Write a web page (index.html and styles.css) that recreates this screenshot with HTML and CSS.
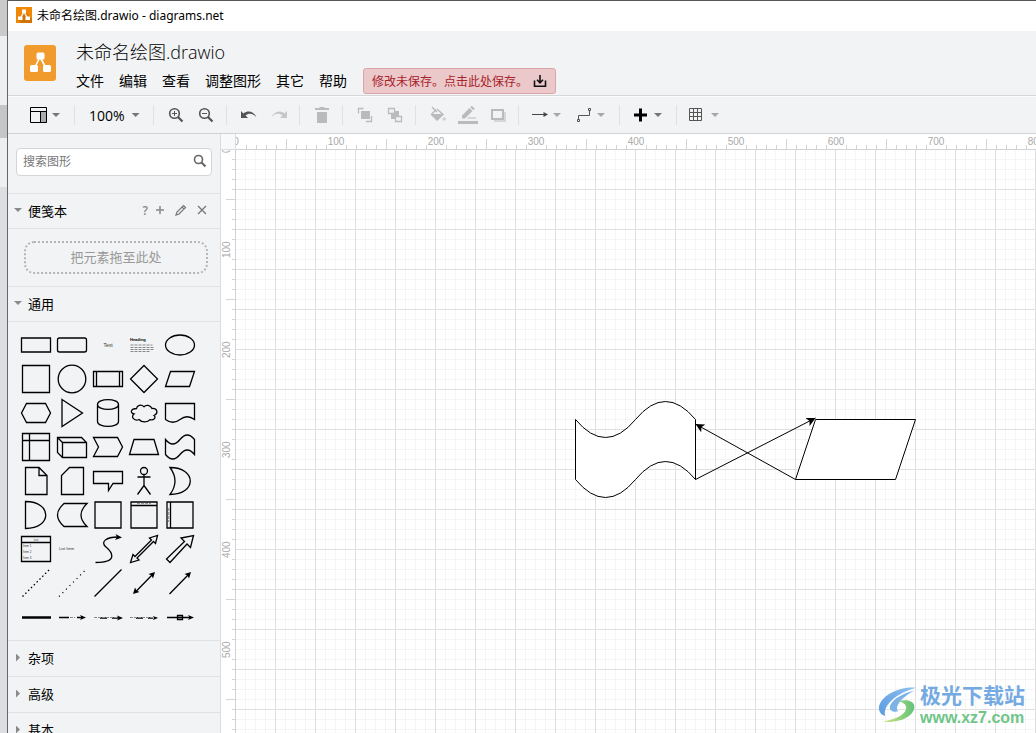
FILE: index.html
```html
<!DOCTYPE html>
<html lang="zh-CN">
<head>
<meta charset="utf-8">
<title>未命名绘图.drawio - diagrams.net</title>
<link rel="stylesheet" href="styles.css">
</head>
<body>
<div class="desktop">
  <div class="backdrop"></div>
  <div class="window">
    <div class="titlebar">
      <svg class="app-icon" width="16" height="16" viewBox="0 0 16 16"><rect width="16" height="16" fill="#f08705"/><path d="M8 4 16 12v4H5l-2-2z" fill="#cf7409"/><path d="M8 5 4.500 11M8 5l3.500 6" stroke="#fff" stroke-width="1.300"/><path d="M6 2.500h4v3.500H6zM2 9.500h4.500V13H2zM9.500 9.500H14V13H9.500z" fill="#fff"/></svg>
      <span>未命名绘图.drawio - diagrams.net</span>
    </div>

    <header class="header">
      <svg class="logo" width="32" height="36" viewBox="0 0 32 36"><rect width="32" height="36" rx="3" fill="#f19b2c"/><path d="M16 12 10.500 23M16 12l6 11" stroke="#fff" stroke-width="1.600"/><rect x="12.500" y="7.500" width="8" height="7" rx="1.500" fill="#fff"/><rect x="6" y="20" width="8" height="7" rx="1.500" fill="#fff"/><rect x="19" y="20" width="8" height="7" rx="1.500" fill="#fff"/></svg>
      <div class="header-main">
        <h1 class="filename">未命名绘图.drawio</h1>
        <nav class="menubar">
          <button>文件</button><button>编辑</button><button>查看</button><button>调整图形</button><button>其它</button><button>帮助</button>
          <button class="save-notice"><span>修改未保存。点击此处保存。</span>
            <svg width="14" height="14" viewBox="0 0 14 14" fill="none" stroke="#111" stroke-width="1.600"><path d="M1.500 6.500v5.700h11V6.500M7 1v7M4 5.800l3 3 3-3"/></svg>
          </button>
        </nav>
      </div>
    </header>

    <div class="toolbar">
      <button class="tool drop" aria-label="视图"><svg width="16" height="18" viewBox="0 0 16 18"><path d="M10 6h6v11h-6z" fill="#aaa"/><path d="M-.5 1.500h16v15h-16zM-.5 5.500h16M9.500 5.500v11" fill="none" stroke="#000"/></svg><i class="caret"></i></button>
      <i class="sep"></i>
      <button class="tool zoom">100%<i class="caret"></i></button>
      <i class="sep"></i>
      <button class="tool" aria-label="放大"><svg width="16" height="16" viewBox="0 0 16 16" fill="none" stroke="#555"><circle cx="6.500" cy="6.500" r="4.800" stroke-width="1.600"/><path d="M10 10l4.500 4.500" stroke-width="2.200"/><path d="M4 6.500h5M6.500 4v5"/></svg></button>
      <button class="tool" aria-label="缩小"><svg width="16" height="16" viewBox="0 0 16 16" fill="none" stroke="#555"><circle cx="6.500" cy="6.500" r="4.800" stroke-width="1.600"/><path d="M10 10l4.500 4.500" stroke-width="2.200"/><path d="M4 6.500h5"/></svg></button>
      <i class="sep"></i>
      <button class="tool" aria-label="撤销"><svg width="16" height="16" viewBox="0 0 16 16"><path d="M0 4v7h7L4.600 8.600C7.500 5.800 12 6 15.500 10.300 13 4.500 7 2.800 2.500 6.500z" fill="#555"/></svg></button>
      <button class="tool" aria-label="重做"><svg width="16" height="16" viewBox="0 0 16 16"><path d="M16 4v7H9l2.400-2.400C8.500 5.800 4 6 .5 10.300 3 4.500 9 2.800 13.500 6.500z" fill="#c4c6c8"/></svg></button>
      <i class="sep"></i>
      <button class="tool" aria-label="删除"><svg width="16" height="16" viewBox="0 0 16 16" fill="#b9bbbd"><path d="M1 1h4l1-1h4l1 1h4v2H1zM3 5h10v11H3z"/></svg></button>
      <i class="sep"></i>
      <button class="tool" aria-label="置前"><svg width="16" height="16" viewBox="0 0 16 16"><path d="M1.500 6.500v-5h5M14.500 9v5.500H9" fill="none" stroke="#b9bbbd" stroke-width="1.300"/><path d="M4 4h9v8H4z" fill="#b9bbbd"/></svg></button>
      <button class="tool" aria-label="置后"><svg width="16" height="16" viewBox="0 0 16 16"><path d="M4 4h8v8H4z" fill="#b9bbbd"/><path d="M1.500 1.500h6v5h-6zM8.500 9.500h6v5h-6z" fill="#f1f3f4" stroke="#b9bbbd" stroke-width="1.300"/></svg></button>
      <i class="sep"></i>
      <button class="tool" aria-label="填充颜色"><svg width="16" height="16" viewBox="0 0 16 16"><path d="M2 0l5 5M6 2.500 1.500 7.500 7 13l6-5.500L7 2" fill="none" stroke="#b9bbbd" stroke-width="1.400"/><path d="M1.500 7h11.500L7 13.500z" fill="#b9bbbd"/><circle cx="14.300" cy="12" r="1.800" fill="#d0d2d4"/></svg></button>
      <button class="tool" aria-label="线条颜色"><svg width="20" height="20" viewBox="0 0 20 20" fill="#b9bbbd"><path d="M4 10.500 11.500 3l3 3L7 13.500H4zM12.300 2.200l1.500-1.500 3 3-1.500 1.500zM10 12.500h8v1h-9zM0 16h20v3H0z"/></svg></button>
      <button class="tool" aria-label="阴影"><svg width="16" height="16" viewBox="0 0 16 16"><path d="M4 5h12v10H4z" fill="#d5d7d9"/><path d="M2 3h11v9H2z" fill="#f1f3f4" stroke="#b9bbbd" stroke-width="2"/></svg></button>
      <i class="sep"></i>
      <button class="tool drop" aria-label="连接"><svg width="16" height="16" viewBox="0 0 16 16"><path d="M0 7.500h13" stroke="#444"/><path d="M11.500 5 16 7.500 11.500 10z" fill="#444"/></svg><i class="caret pale"></i></button>
      <button class="tool drop" aria-label="航点"><svg width="16" height="16" viewBox="0 0 16 16" fill="none" stroke="#555"><path d="M2.500 12V8.500h11V4M1.500 12.500h2v2h-2zM12.500 1.500h2v2h-2z"/></svg><i class="caret pale"></i></button>
      <i class="sep"></i>
      <button class="tool drop" aria-label="插入"><svg width="16" height="16" viewBox="0 0 16 16"><path d="M1 8h13M7.500 1.500v13" stroke="#000" stroke-width="3"/></svg><i class="caret"></i></button>
      <i class="sep"></i>
      <button class="tool drop" aria-label="表格"><svg width="16" height="16" viewBox="0 0 16 16" fill="none" stroke="#555"><path d="M-.5 1.500h12v12h-12zM3.500 1.500v12M7.500 1.500v12M-.5 5.500h12M-.5 9.500h12"/></svg><i class="caret pale"></i></button>
    </div>

    <div class="workspace">
      <aside class="sidebar">
        <div class="search-area">
          <div class="search">
            <input type="text" aria-label="搜索图形" placeholder="搜索图形">
            <svg width="14" height="14" viewBox="0 0 14 14" fill="none" stroke="#666"><circle cx="5.500" cy="5.500" r="4" stroke-width="1.600"/><path d="M8.500 8.500 12.500 12.500" stroke-width="2.200"/></svg>
          </div>
        </div>
        <div class="section open"><button class="section-name"><i class="caret"></i>便笺本</button>
          <div class="section-tools">
            <button aria-label="帮助">?</button>
            <button aria-label="添加"><svg width="10" height="10" viewBox="0 0 10 10"><path d="M1 5h8M5 1v8" stroke="#888" stroke-width="1.500"/></svg></button>
            <button aria-label="编辑"><svg width="12" height="12" viewBox="0 0 12 12" fill="none" stroke="#777" stroke-width="1.200"><path d="M1 11l1-3L8.500 1.500l2 2L4 10zM7 3l2 2"/></svg></button>
            <button aria-label="关闭"><svg width="10" height="10" viewBox="0 0 10 10"><path d="M1 1l8 8M9 1 1 9" stroke="#777" stroke-width="1.300"/></svg></button>
          </div>
        </div>
        <div class="scratch"><div class="dropzone">把元素拖至此处</div></div>
        <div class="section open"><button class="section-name"><i class="caret"></i>通用</button></div>
        <div class="palette">
          <svg viewBox="0 0 36 34"><path d="M3.500 10h29v14h-29z"/></svg>
          <svg viewBox="0 0 36 34"><rect x="3.500" y="10" width="29" height="14" rx="2"/></svg>
          <svg viewBox="0 0 36 34"><text x="18" y="19" class="tiny mid">Text</text></svg>
          <svg viewBox="0 0 36 34"><text x="4" y="13" class="tiny strong">Heading</text><path class="faint" d="M4.500 17h22M4.500 19.500h24M4.500 21.500h24M4.500 23.500h20"/></svg>
          <svg viewBox="0 0 36 34"><ellipse cx="18" cy="17" rx="14.500" ry="10"/></svg>

          <svg viewBox="0 0 36 34"><path d="M4.500 3.500h27v27h-27z"/></svg>
          <svg viewBox="0 0 36 34"><circle cx="18" cy="17" r="13.800"/></svg>
          <svg viewBox="0 0 36 34"><path d="M3.500 9.500h29v15h-29zM6.500 9.500v15M29.500 9.500v15"/></svg>
          <svg viewBox="0 0 36 34"><path d="M18 3.500 31.500 17 18 30.500 4.500 17z"/></svg>
          <svg viewBox="0 0 36 34"><path d="M8.500 9.500h24l-5 15h-24z"/></svg>

          <svg viewBox="0 0 36 34"><path d="M8.500 7.500h19L32.500 17l-5 9.500h-19L3.500 17z"/></svg>
          <svg viewBox="0 0 36 34"><path d="M8 3.500 28.500 17 8 30.500z"/></svg>
          <svg viewBox="0 0 36 34"><path d="M7.500 8.500v17c0 6.500 21 6.500 21 0v-17c0-6.500-21-6.500-21 0c0 6.500 21 6.500 21 0"/></svg>
          <svg viewBox="0 0 36 34"><path d="M10.500 12.500C5 12.500 3.500 17 8 18c-4 3 1 7.500 5 5.500 3 3.500 9 3 11 .2 4 1 6.500-2.500 4-4.200 5-2.500 3-7.500-2-7-1.500-3.500-6-4-8-1.800-3-2.700-7-1.700-7.500 1.800z"/></svg>
          <svg viewBox="0 0 36 34"><path d="M3.500 7.500h29v16q-7.500-5.500-14.500 0t-14.500 0z"/></svg>

          <svg viewBox="0 0 36 34"><path d="M4.500 3.500h27v27h-27zM4.500 10.500h27M11.500 3.500v27"/></svg>
          <svg viewBox="0 0 36 34"><path d="M3.500 7.500h24l5 5v15h-24l-5-5zM3.500 7.500l5 5h24M8.500 12.500v15"/></svg>
          <svg viewBox="0 0 36 34"><path d="M3.500 7.500h24L32.500 17l-5 9.500h-24L8.500 17z"/></svg>
          <svg viewBox="0 0 36 34"><path d="M8 9.500h20l4.500 15h-29z"/></svg>
          <svg viewBox="0 0 36 34"><path d="M3.500 9.500q7.200 9 14.500 0t14.500 0v15q-7.200-9-14.500 0t-14.500 0z"/></svg>

          <svg viewBox="0 0 36 34"><path d="M7.500 3.500H21l8 8v19H7.500zM21 3.500v8h8"/></svg>
          <svg viewBox="0 0 36 34"><path d="M15.500 3.500h14v27h-22v-19z"/></svg>
          <svg viewBox="0 0 36 34"><path d="M3.500 7.500h29v12H23L18.500 26.500v-7h-15z"/></svg>
          <svg viewBox="0 0 36 34"><circle cx="18" cy="7" r="3.500"/><path d="M18 10.500v11M11.500 13h13M18 21.500l-6.500 9M18 21.500l6.500 9"/></svg>
          <svg viewBox="0 0 36 34"><path d="M8 3.500c27 0 27 27 0 27q10-13.500 0-27z"/></svg>

          <svg viewBox="0 0 36 34"><path d="M7.500 3.500c27 0 27 27 0 27z"/></svg>
          <svg viewBox="0 0 36 34"><path d="M10 5.500h23q-12 11.500 0 23H10q-13-11.500 0-23z"/></svg>
          <svg viewBox="0 0 36 34"><path d="M5 4h26v26H5z"/></svg>
          <svg viewBox="0 0 36 34"><path d="M5 4h26v26H5zM5 7.500h26"/><path class="faint" d="M11 5.700h14"/></svg>
          <svg viewBox="0 0 36 34"><path d="M5 4h26v26H5zM8.500 4v26"/><path class="faint" d="M6.700 10v14"/></svg>

          <svg viewBox="0 0 36 34"><path d="M3.500 4.500h29v25h-29zM3.500 10.500h29"/><text x="18" y="8.500" class="micro mid">List</text><text x="5" y="15" class="micro">Item 1</text><text x="5" y="21" class="micro">Item 2</text><text x="5" y="27" class="micro">Item 3</text></svg>
          <svg viewBox="0 0 36 34"><text x="5" y="18" class="micro item">List Item</text></svg>
          <svg viewBox="0 0 36 34"><path d="M5.500 30.500C29 30.500 22 20 16 15s0-10 12-10"/><path class="solid" d="M32 5.500 25 8l2-3-1.500-3z"/></svg>
          <svg viewBox="0 0 36 34"><path d="M31.500 3.500 29.500 11.500 27.500 9.500 11 26l2 2-8.500 2.500L7 22.500l2 2L25.500 8l-2-2z"/></svg>
          <svg viewBox="0 0 36 34"><path d="M31.500 3.500 28.500 15.500 25 12 8 30.500 4.500 27 22.500 9.500 19 6z"/></svg>

          <svg viewBox="0 0 36 34"><path d="M4.500 30.500l27-27" stroke-dasharray="1.500 2.500"/></svg>
          <svg viewBox="0 0 36 34"><path d="M5 30.500l26-26" stroke-dasharray="1 4"/></svg>
          <svg viewBox="0 0 36 34"><path d="M4.500 30.500l27-27"/></svg>
          <svg viewBox="0 0 36 34"><path d="M9 26.500 27 8"/><path class="solid" d="M29 6 27 12.500l-1.500-3-3-1.500zM7 28l2-6.500 1.500 3 3 1.500z"/></svg>
          <svg viewBox="0 0 36 34"><path d="M7.500 28 27 8"/><path class="solid" d="M29 6 27 12.500l-1.500-3-3-1.500z"/></svg>

          <svg viewBox="0 0 36 34"><path class="thick" d="M4 17.500h29"/></svg>
          <svg viewBox="0 0 36 34"><path d="M5 17.500h10M23 17.500h6"/><path class="faint" d="M16 17.500h5"/><path class="solid" d="M32 17.500l-6 2.500 1.500-2.500L26 15z"/></svg>
          <svg viewBox="0 0 36 34"><path d="M10 18h7M22 18h8"/><path class="faint" d="M4 17.500h28"/><path class="solid" d="M33 18l-6 2.500 1.500-2.500-1.500-2.500z"/></svg>
          <svg viewBox="0 0 36 34"><path d="M10 18h7M22 18h5"/><path class="faint" d="M4 17.500h28"/><path class="solid" d="M32 18l-5 2 1-2-1-2z"/></svg>
          <svg viewBox="0 0 36 34"><path d="M5 17.500h24M15.500 15.500h5v4h-5z"/><path class="solid" d="M32 17.500l-6 2.500 1.500-2.500L26 15z"/></svg>
        </div>
        <div class="section"><button class="section-name"><i class="caret side"></i>杂项</button></div>
        <div class="section"><button class="section-name"><i class="caret side"></i>高级</button></div>
        <div class="section"><button class="section-name"><i class="caret side"></i>基本</button></div>
      </aside>

      <main class="editor">
        <div class="corner"></div>
        <div class="ruler across"><div class="labels"><span>0</span><span>100</span><span>200</span><span>300</span><span>400</span><span>500</span><span>600</span><span>700</span><span>800</span></div></div>
        <div class="ruler down"><div class="labels"><span>0</span><span>100</span><span>200</span><span>300</span><span>400</span><span>500</span></div></div>
        <div class="canvas">
          <svg class="diagram" width="100%" height="100%">
            <defs><marker id="arrow" markerWidth="10" markerHeight="10" refX="9" refY="5" orient="auto" markerUnits="userSpaceOnUse"><path d="M9 5 0 .5l2.300 4.500L0 9.500z" fill="#000"/></marker></defs>
            <g fill="#fff" stroke="#000">
              <path d="M339.500 269.500q30 36 60 0t60 0v60q-30-36-60 0t-60 0z"/>
              <path d="M579.500 269.500h100l-20 60h-100z"/>
              <path d="M459.500 329.500 579.500 268" fill="none" marker-end="url(#arrow)"/>
              <path d="M559.500 329.500 459.500 274" fill="none" marker-end="url(#arrow)"/>
            </g>
          </svg>
          <div class="watermark">
            <svg width="40" height="42" viewBox="0 0 44 42">
              <defs><linearGradient id="sky" x1="0" y1="1" x2="1" y2="0"><stop offset="0" stop-color="#5b9be0"/><stop offset="1" stop-color="#8cc0ee"/></linearGradient><linearGradient id="leaf"><stop offset="0" stop-color="#d3e478"/><stop offset="1" stop-color="#62c27c"/></linearGradient></defs>
              <path d="M42 2C22 0 2 12 1 24c0 5 3 8 7 9-3-9 8-24 34-31z" fill="url(#sky)"/>
              <path d="M40 5C24 9 13 17 13 24c0 4 5 5 9 4-4-5 3-15 18-23z" fill="#7db4e8"/>
              <path d="M22 17c9-3 18-1 18 6 0 10-16 19-36 16 15-1 27-8 27-15 0-4-4-6-9-7z" fill="url(#leaf)"/>
            </svg>
            <div class="watermark-text"><strong>极光下载站</strong><span>www.xz7.com</span></div>
          </div>
        </div>
      </main>
    </div>
  </div>
</div>
</body>
</html>
```

FILE: styles.css
```css
* { box-sizing: border-box; }
body {
  margin: 0;
  font-family: "Open Sans", "Noto Sans CJK SC", sans-serif;
  font-size: 13px;
  color: #000;
}
button {
  display: flex;
  align-items: center;
  padding: 0;
  border: 0;
  background: none;
  font: inherit;
  color: inherit;
  white-space: nowrap;
}
svg { display: block; flex: none; overflow: visible; }

.desktop { display: flex; height: 100vh; overflow: hidden; }
.backdrop {
  flex: 0 0 7px;
  background: linear-gradient(#cacaca 36px, #efefef 36px 105px, #c6c6c6 105px 138px, #efefef 138px 187px, #dcdee1 187px);
}
.window {
  flex: 1;
  min-width: 0;
  display: flex;
  flex-direction: column;
  border-left: 1px solid #666;
  border-top: 1px solid #555;
  background: #f1f3f4;
}
.titlebar {
  flex: none;
  display: flex;
  align-items: center;
  gap: 5px;
  height: 30px;
  padding: 0 8px 2px;
  background: #fff;
  font-family: "Noto Sans", "Noto Sans CJK SC", sans-serif;
  font-size: 12px;
}

.header {
  flex: none;
  display: flex;
  gap: 20px;
  padding: 9px 16px 1px;
  border-bottom: 1px solid #d5d7d9;
}
.logo { margin-top: 5px; }
.header-main { display: flex; flex-direction: column; gap: 4px; }
.filename { margin: 0; font-size: 18px; font-weight: 300; line-height: 24px; }
.menubar { display: flex; gap: 15px; height: 26px; font-size: 14px; }
.menubar button { padding-bottom: 2px; }
.menubar .save-notice {
  gap: 5px;
  margin-left: 1px;
  padding: 0 8px;
  border: 1px solid #dba5a8;
  border-radius: 3px;
  background: #ebc8ca;
  color: #a8232b;
  font-size: 12px;
}

.toolbar {
  flex: none;
  display: flex;
  align-items: center;
  height: 38px;
  padding-left: 16px;
  border-top: 1px solid #fbfbfb;
  border-bottom: 1px solid #d0d2d4;
}
.tool { flex: none; width: 30px; height: 30px; padding-left: 2px; justify-content: center; }
.tool.drop { width: 44px; gap: 5px; padding-left: 7px; justify-content: flex-start; }
.tool.zoom { width: 66px; gap: 7px; padding-left: 8px; justify-content: flex-start; font-size: 14px; }
.sep { flex: none; width: 1px; height: 20px; margin: 0 6px; background: #dfe1e3; }
.caret {
  flex: none;
  width: 8px;
  height: 4px;
  background: #777;
  clip-path: polygon(0 0, 100% 0, 50% 100%);
}
.caret.pale { background: #a5a7a9; }
.caret.side { width: 4px; height: 8px; margin: 0 2px; clip-path: polygon(0 0, 100% 50%, 0 100%); }

.workspace { flex: 1; min-height: 0; display: flex; }
.sidebar { flex: 0 0 213px; overflow: hidden; border-right: 1px solid #dadce0; }
.search-area { padding: 14px 8px 17px; }
.search {
  display: flex;
  align-items: center;
  height: 28px;
  padding: 0 4px 2px 6px;
  border: 1px solid #d5d5d5;
  border-radius: 4px;
  background: #fff;
}
.search input {
  flex: 1;
  min-width: 0;
  padding: 0;
  border: 0;
  outline: 0;
  background: none;
  font: inherit;
  font-size: 12px;
}
.search input::placeholder { color: #777; }
.section {
  display: flex;
  align-items: center;
  justify-content: space-between;
  height: 36px;
  padding: 0 13px 2px 6px;
  border-top: 1px solid #dee0e2;
}
.section.open { border-bottom: 1px solid #dee0e2; }
.section-name { gap: 6px; }
.section-name .caret { background: #8a8a8a; }
.section-tools { display: flex; align-items: center; gap: 10px; color: #888; font-size: 12px; font-weight: 600; }
.section-tools button:first-child { margin-right: -3px; }
.scratch { padding: 12px 12px 12px 16px; }
.dropzone {
  height: 33px;
  line-height: 29px;
  border: 2px dotted #b4b5b6;
  border-radius: 10px;
  color: #999;
  text-align: center;
}
.palette {
  display: grid;
  grid-template-columns: repeat(5, 36px);
  grid-auto-rows: 34px;
  padding: 6px 10px;
}
.palette svg { width: 36px; height: 34px; fill: none; stroke: #000; stroke-width: 1.3; }
.palette text { fill: #333; stroke: none; font-family: "Liberation Sans", sans-serif; }
.palette .tiny { font-size: 5px; }
.palette .micro { font-size: 3px; }
.palette .item { font-size: 4px; }
.palette .mid { text-anchor: middle; }
.palette .strong { font-size: 4px; font-weight: 700; fill: #000; }
.palette .faint { stroke: #888; stroke-width: 1; stroke-dasharray: 3 1; }
.palette .solid { fill: #000; stroke: none; }
.palette .thick { stroke-width: 2.5; }

.editor {
  flex: 1;
  min-width: 0;
  display: grid;
  grid-template: 16px minmax(0, 1fr) / 15px minmax(0, 1fr);
  background: #fff;
}
.corner { border-right: 1px solid #dadce0; border-bottom: 1px solid #dadce0; background: #f8f9fa; }
.ruler { overflow: hidden; color: #aaa; font-family: "Liberation Sans", sans-serif; font-size: 10px; }
.ruler .labels { display: flex; }
.ruler span { flex: none; text-align: center; }
.across {
  border-bottom: 1px solid #d0d2d4;
  background:
    repeating-linear-gradient(90deg, #d4d4d4 0 1px, transparent 1px 50px) 0 5px / 100% 10px no-repeat,
    repeating-linear-gradient(90deg, #d4d4d4 0 1px, transparent 1px 10px) 0 11px / 100% 4px no-repeat;
}
.across .labels { margin-left: -50px; background: linear-gradient(90deg, transparent 42px, #fff 42px 58px, transparent 58px) 0 0 / 100px; }
.across span { width: 100px; height: 15px; line-height: 16px; }
.down {
  border-right: 1px solid #d0d2d4;
  background:
    repeating-linear-gradient(transparent 0 49px, #d4d4d4 49px 50px) 5px 0 / 10px 100% no-repeat,
    repeating-linear-gradient(transparent 0 9px, #d4d4d4 9px 10px) 11px 0 / 4px 100% no-repeat;
}
.down .labels { flex-direction: column; margin-top: -50px; background: linear-gradient(transparent 42px, #fff 42px 58px, transparent 58px) 0 0 / 100% 100px; }
.down span { width: 14px; height: 100px; line-height: 12px; writing-mode: vertical-rl; transform: rotate(180deg); }

.canvas {
  position: relative;
  overflow: hidden;
  background-color: #fff;
  background-image:
    repeating-linear-gradient(90deg, transparent 0 39px, #e0e0e0 39px 40px),
    repeating-linear-gradient(transparent 0 39px, #e0e0e0 39px 40px),
    repeating-linear-gradient(90deg, transparent 0 9px, #f5f5f5 9px 10px),
    repeating-linear-gradient(transparent 0 9px, #f5f5f5 9px 10px);
}
.watermark {
  position: absolute;
  right: 11px;
  bottom: 5px;
  display: flex;
  align-items: center;
  gap: 2px;
}
.watermark-text { display: flex; flex-direction: column; }
.watermark-text strong { color: #74aae2; font-size: 21px; line-height: 26px; }
.watermark-text span { color: #6fc588; font-family: "Liberation Sans", sans-serif; font-size: 16px; font-weight: 700; line-height: 20px; }
```
